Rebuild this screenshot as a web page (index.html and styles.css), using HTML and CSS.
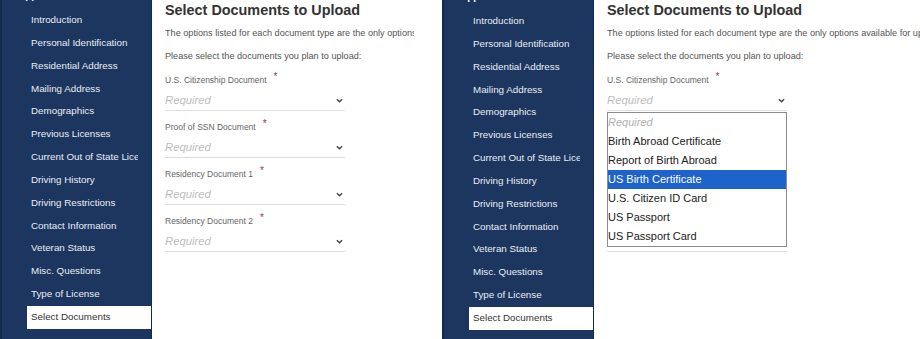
FILE: index.html
```html
<!DOCTYPE html>
<html lang="en">
<head>
  <meta charset="UTF-8" />
  <meta name="viewport" content="width=device-width, initial-scale=1" />
  <title>Select Documents to Upload</title>
  <link rel="stylesheet" href="styles.css">
</head>
<body>
  <div class="shots">

    <!-- Closed state -->
    <section class="app app--first">
      <aside class="sidebar">
        <div class="sidebar-title">Application</div>
        <ul class="steps">
          <li><a href="#"><span>Introduction</span></a></li>
          <li><a href="#"><span>Personal Identification</span></a></li>
          <li><a href="#"><span>Residential Address</span></a></li>
          <li><a href="#"><span>Mailing Address</span></a></li>
          <li><a href="#"><span>Demographics</span></a></li>
          <li><a href="#"><span>Previous Licenses</span></a></li>
          <li><a href="#"><span>Current Out of State License</span></a></li>
          <li><a href="#"><span>Driving History</span></a></li>
          <li><a href="#"><span>Driving Restrictions</span></a></li>
          <li><a href="#"><span>Contact Information</span></a></li>
          <li><a href="#"><span>Veteran Status</span></a></li>
          <li><a href="#"><span>Misc. Questions</span></a></li>
          <li><a href="#"><span>Type of License</span></a></li>
          <li class="active"><a href="#"><span>Select Documents</span></a></li>
        </ul>
      </aside>
      <main class="content">
        <h1>Select Documents to Upload</h1>
        <p class="lead">The options listed for each document type are the only options available for upload.</p>
        <p class="lead">Please select the documents you plan to upload:</p>

        <div class="field">
          <label>U.S. Citizenship Document<span class="req">*</span></label>
          <div class="select">
            <span class="placeholder">Required</span>
            <svg class="chevron" viewBox="0 0 8 5" aria-hidden="true"><path d="M1 1l3 3 3-3" /></svg>
          </div>
        </div>
        <div class="field">
          <label>Proof of SSN Document<span class="req">*</span></label>
          <div class="select">
            <span class="placeholder">Required</span>
            <svg class="chevron" viewBox="0 0 8 5" aria-hidden="true"><path d="M1 1l3 3 3-3" /></svg>
          </div>
        </div>
        <div class="field">
          <label>Residency Document 1<span class="req">*</span></label>
          <div class="select">
            <span class="placeholder">Required</span>
            <svg class="chevron" viewBox="0 0 8 5" aria-hidden="true"><path d="M1 1l3 3 3-3" /></svg>
          </div>
        </div>
        <div class="field">
          <label>Residency Document 2<span class="req">*</span></label>
          <div class="select">
            <span class="placeholder">Required</span>
            <svg class="chevron" viewBox="0 0 8 5" aria-hidden="true"><path d="M1 1l3 3 3-3" /></svg>
          </div>
        </div>
      </main>
    </section>

    <!-- Open dropdown state -->
    <section class="app app--second">
      <aside class="sidebar">
        <div class="sidebar-title">Application</div>
        <ul class="steps">
          <li><a href="#"><span>Introduction</span></a></li>
          <li><a href="#"><span>Personal Identification</span></a></li>
          <li><a href="#"><span>Residential Address</span></a></li>
          <li><a href="#"><span>Mailing Address</span></a></li>
          <li><a href="#"><span>Demographics</span></a></li>
          <li><a href="#"><span>Previous Licenses</span></a></li>
          <li><a href="#"><span>Current Out of State License</span></a></li>
          <li><a href="#"><span>Driving History</span></a></li>
          <li><a href="#"><span>Driving Restrictions</span></a></li>
          <li><a href="#"><span>Contact Information</span></a></li>
          <li><a href="#"><span>Veteran Status</span></a></li>
          <li><a href="#"><span>Misc. Questions</span></a></li>
          <li><a href="#"><span>Type of License</span></a></li>
          <li class="active"><a href="#"><span>Select Documents</span></a></li>
        </ul>
      </aside>
      <main class="content">
        <h1>Select Documents to Upload</h1>
        <p class="lead">The options listed for each document type are the only options available for upload.</p>
        <p class="lead">Please select the documents you plan to upload:</p>

        <div class="field field--open">
          <label>U.S. Citizenship Document<span class="req">*</span></label>
          <div class="select">
            <span class="placeholder">Required</span>
            <svg class="chevron" viewBox="0 0 8 5" aria-hidden="true"><path d="M1 1l3 3 3-3" /></svg>
          </div>
          <ul class="options" role="listbox">
            <li class="option option--placeholder">Required</li>
            <li class="option">Birth Abroad Certificate</li>
            <li class="option">Report of Birth Abroad</li>
            <li class="option option--hover">US Birth Certificate</li>
            <li class="option">U.S. Citizen ID Card</li>
            <li class="option">US Passport</li>
            <li class="option">US Passport Card</li>
          </ul>
        </div>
        <!-- fields below sit under the open list -->
        <div class="field field--covered">
          <label>Proof of SSN Document<span class="req">*</span></label>
          <div class="select">
            <span class="placeholder">Required</span>
            <svg class="chevron" viewBox="0 0 8 5" aria-hidden="true"><path d="M1 1l3 3 3-3" /></svg>
          </div>
        </div>
        <div class="field field--covered">
          <label>Residency Document 1<span class="req">*</span></label>
          <div class="select">
            <span class="placeholder">Required</span>
            <svg class="chevron" viewBox="0 0 8 5" aria-hidden="true"><path d="M1 1l3 3 3-3" /></svg>
          </div>
        </div>
        <div class="field field--covered">
          <label>Residency Document 2<span class="req">*</span></label>
          <div class="select">
            <span class="placeholder">Required</span>
            <svg class="chevron" viewBox="0 0 8 5" aria-hidden="true"><path d="M1 1l3 3 3-3" /></svg>
          </div>
        </div>
      </main>
    </section>

  </div>
</body>
</html>
```

FILE: styles.css
```css
:root {
  --navy: #1c365f;
  --navy-edge: #132a4c;
  --text-dark: #333333;
  --text-body: #555555;
  --text-label: #666666;
  --text-placeholder: #bdbdbd;
  --line: #dddddd;
  --required: #8a4444;
  --highlight: #1e63cc;
  --font: "Liberation Sans", Arial, sans-serif;
}

*, *::before, *::after {
  box-sizing: border-box;
}

html, body {
  height: 100%;
}

body {
  margin: 0;
  background: #ffffff;
  font-family: var(--font);
  color: var(--text-body);
  overflow: hidden;
}

.shots {
  display: flex;
  height: 100%;
  gap: 28px;
}

/* One app screen */
.app {
  display: flex;
  height: 100%;
  overflow: hidden;
  flex-shrink: 0;
}

.app--first {
  width: 414px;
}

.app--second {
  width: 478px;
}

/* Sidebar */
.sidebar {
  width: 152px;
  flex-shrink: 0;
  background: var(--navy);
  border-left: 2px solid var(--navy-edge);
  border-right: 1px solid var(--navy-edge);
  margin-top: -11px;
}

.app--second .sidebar {
  margin-top: -10px;
}

.sidebar-title {
  font-size: 10px;
  font-weight: 700;
  color: #ffffff;
  line-height: 14px;
  padding-left: 16px;
}

.steps {
  list-style: none;
  margin: 6px 0 0 25px;
  padding: 0;
}

.steps a {
  display: block;
  padding-left: 4px;
  height: 22.85px;
  line-height: 22.85px;
  font-size: 9.8px;
  color: #e9edf4;
  text-decoration: none;
}

.steps a span {
  display: block;
  overflow: hidden;
  white-space: nowrap;
  margin-right: 13px;
}

.steps .active a {
  background: #ffffff;
  color: var(--text-dark);
}

/* Main content */
.content {
  flex: 1;
  padding: 0 0 0 13px;
  min-width: 0;
}

.content h1 {
  margin: 0;
  font-size: 14.4px;
  line-height: 20px;
  font-weight: 700;
  color: var(--text-dark);
  white-space: nowrap;
}

.lead {
  margin: 0;
  font-size: 9.15px;
  line-height: 23px;
  color: var(--text-body);
  white-space: nowrap;
}

.lead:first-of-type {
  margin-top: 2px;
}

/* Form fields */
.field {
  position: relative;
  width: 180px;
  margin-top: 10px;
}

.lead + .field {
  margin-top: 6px;
}

.field label {
  display: block;
  font-size: 8.5px;
  line-height: 12px;
  color: var(--text-label);
  white-space: nowrap;
}

.req {
  margin-left: 7px;
  font-size: 10px;
  line-height: 0;
  vertical-align: 3px;
  color: var(--required);
}

.select {
  display: flex;
  align-items: center;
  justify-content: space-between;
  padding: 4px 2px 0 0;
  height: 25px;
  border-bottom: 1px solid var(--line);
}

.placeholder {
  font-size: 11.3px;
  line-height: 20px;
  font-style: italic;
  color: var(--text-placeholder);
}

.chevron {
  width: 7px;
  height: 5px;
  fill: none;
  stroke: #444444;
  stroke-width: 1.6;
}

/* Fields hidden behind the open list */
.field--covered label,
.field--covered .placeholder,
.field--covered .chevron {
  visibility: hidden;
}

/* Open dropdown */
.options {
  position: absolute;
  top: calc(100% + 1px);
  left: 0;
  width: 180px;
  margin: 0;
  padding: 0;
  list-style: none;
  background: #ffffff;
  border: 1px solid #8c8c8c;
  z-index: 5;
}

.option {
  height: 19px;
  line-height: 19px;
  padding: 0;
  font-size: 11px;
  color: #222222;
  white-space: nowrap;
}

.option--placeholder {
  font-style: italic;
  color: #b0b0b0;
}

.option--hover {
  background: var(--highlight);
  color: #ffffff;
}
```
